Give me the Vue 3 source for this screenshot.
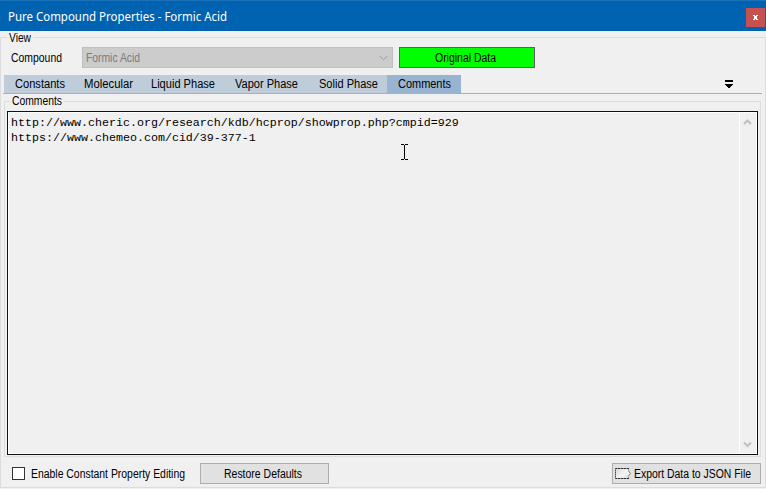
<script setup>
import { h } from 'vue'

// Single-line label condensed to a given advance width; the baseline sits 4px above the box bottom.
const Label = (props) =>
  h('svg', { class: 'label', width: props.w, height: 17 }, [
    h('text', { x: 0, y: 13, textLength: props.w, lengthAdjust: 'spacingAndGlyphs' }, props.text)
  ])
Label.props = ['text', 'w']

const tabs = [
  { text: 'Constants', w: 50, width: 69 },
  { text: 'Molecular', w: 49, width: 67 },
  { text: 'Liquid Phase', w: 64, width: 84 },
  { text: 'Vapor Phase', w: 63, width: 84 },
  { text: 'Solid Phase', w: 59, width: 79 },
  { text: 'Comments', w: 53, width: 74, active: true }
]
const comments = [
  'http://www.cheric.org/research/kdb/hcprop/showprop.php?cmpid=929',
  'https://www.chemeo.com/cid/39-377-1'
]
</script>

<template>
  <div class="window">
    <header class="titlebar">
      <Label class="title" text="Pure Compound Properties - Formic Acid" :w="219" />
      <button class="close" aria-label="Close">
        <svg width="5" height="5" shape-rendering="crispEdges" fill="#fff">
          <path d="M0 0h2v1h1V0h2v1H4v3h1v1H3V4H2v1H0V4h1V1H0z" />
        </svg>
      </button>
    </header>
    <section class="view">
      <div class="caption"><Label text="View" :w="22" /></div>
      <div class="compound">
        <Label class="name" text="Compound" :w="51" />
        <div class="combo">
          <Label text="Formic Acid" :w="54" />
          <svg width="9" height="6"><path d="M.5.8l4 4 4-4" fill="none" stroke="#9a9a9a" /></svg>
        </div>
        <button class="original"><Label text="Original Data" :w="61" /></button>
      </div>
      <nav class="tabs">
        <div
          v-for="tab in tabs"
          :key="tab.text"
          class="tab"
          :class="{ active: tab.active }"
          :style="{ width: tab.width + 'px' }"
        >
          <Label :text="tab.text" :w="tab.w" />
        </div>
        <svg class="overflow" width="8" height="8" shape-rendering="crispEdges">
          <path d="M0 0h8v2H0zM0 4h8v1H7v1H6v1H5v1H3V7H2V6H1V5H0z" />
        </svg>
      </nav>
      <section class="comments">
        <div class="caption"><Label text="Comments" :w="50" /></div>
        <div class="editor">
          <div class="text">
            <div v-for="line in comments" :key="line">{{ line }}</div>
            <svg class="cursor" width="7" height="16" shape-rendering="crispEdges">
              <path d="M0 0h3v1h1V0h3v1H4v14h3v1H4v-1H3v1H0v-1h3V1H0z" />
            </svg>
          </div>
          <div class="scroll">
            <svg width="9" height="7"><path d="M1 5l3.5-3.5L8 5" fill="none" stroke="#bfbfbf" stroke-width="2" /></svg>
            <svg width="9" height="7"><path d="M1 1.5L4.5 5 8 1.5" fill="none" stroke="#bfbfbf" stroke-width="2" /></svg>
          </div>
        </div>
      </section>
      <footer class="actions">
        <span class="checkbox"></span>
        <Label class="enable" text="Enable Constant Property Editing" :w="154" />
        <button class="restore"><Label text="Restore Defaults" :w="78" /></button>
        <button class="export">
          <svg width="16" height="12">
            <defs>
              <linearGradient id="sheet" x2="1" y2="1">
                <stop stop-color="#d5dad7" /><stop offset=".6" stop-color="#f4f6f5" /><stop offset="1" stop-color="#d4dcd8" />
              </linearGradient>
            </defs>
            <path d="M.5.5h13v10H.5z" fill="url(#sheet)" stroke="#8a8a8a" />
            <path d="M0 .5h14M0 10.5h14" stroke="#333" stroke-dasharray="2 1" />
            <path d="M.5 0v11" stroke="#555" stroke-dasharray="1 1" />
            <path d="M11 4h2V2l3 3.5L13 9V7h-2z" fill="#f1f1f1" />
            <path d="M13.5 3l2 2.5-2 2.5" fill="none" stroke="#777" />
          </svg>
          <Label text="Export Data to JSON File" :w="117" />
        </button>
      </footer>
    </section>
  </div>
</template>

<style>
body { margin: 0; overflow: hidden; }
</style>

<style scoped>
* { box-sizing: border-box; }
.window {
  width: 766px; height: 489px; display: flex; flex-direction: column;
  background: #f0f0f0; color: #000; font: 12px/15px "Liberation Sans", Arial, sans-serif;
}
svg { display: block; flex: none; }
.label { fill: currentColor; overflow: visible; }
button { margin: 0; padding: 0; border-radius: 0; font: inherit; color: inherit; display: flex; align-items: center; justify-content: center; }
.titlebar {
  height: 31px; flex: none; display: flex; justify-content: space-between;
  padding: 7px 1px 0 8px; background: #0063b1; border-top: 1px solid #1a70b6; color: #fff;
}
.title { font: 12px "Noto Sans", "Open Sans", sans-serif; }
.close { width: 19px; height: 19px; background: #c75050; border: 0; }
.view { height: 451px; flex: none; margin-top: 6px; border: 1px solid #dcdcdc; display: flex; flex-direction: column; }
.caption { display: flex; margin-top: -9px; }
.caption .label {
  box-sizing: content-box; padding: 0 2px;
  background: linear-gradient(#f0f0f0, #f0f0f0) no-repeat 0 6px / 100% 5px;
}
.view > .caption { padding-left: 6px; height: 18px; }
.compound { display: flex; height: 21px; flex: none; align-items: center; padding-left: 10px; }
.name { margin-right: 20px; }
.combo {
  width: 311px; height: 21px; display: flex; align-items: center; justify-content: space-between;
  padding: 0 4px 0 3px; border: 1px solid #bfbfbf; background: #ccc; color: #7b7b7b;
}
.original { width: 136px; height: 21px; margin-left: 6px; border: 1px solid #606060; background: #0f0; }
.original .label { margin-right: 3px; }
.tabs { height: 19px; flex: none; display: flex; margin: 7px 3px 0 2px; padding-left: 1px; border-bottom: 1px solid #99b4d1; }
.tab { height: 18px; padding-left: 11px; background: #bfcddb; }
.active { background: #99b4d1; }
.overflow { margin: 5px 0 0 264px; }
.comments { width: 757px; height: 356px; flex: none; margin: 7px 0 0 3px; border: 1px solid #dcdcdc; }
.comments > .caption { height: 19px; margin-top: -10px; padding-left: 5px; }
.editor { width: 751px; height: 344px; display: flex; margin-left: 2px; border: 1px solid #111; }
.text {
  position: relative; flex: 1; padding: 3px 2px; border: 1px solid #fff;
  font: 11.67px/15px "Liberation Mono", "Courier New", monospace; white-space: pre;
}
.cursor { position: absolute; left: 392px; top: 31px; }
.scroll {
  width: 17px; display: flex; flex-direction: column; justify-content: space-between;
  align-items: flex-start; padding: 6px 0 5px 3px; border: solid #fff; border-width: 1px 1px 1px 0;
}
.actions { height: 21px; flex: none; display: flex; align-items: center; margin-top: 6px; padding-left: 11px; }
.checkbox { width: 13px; height: 13px; border: 1px solid #333; background: #fff; }
.enable { margin-left: 6px; }
.restore, .export { height: 21px; border: 1px solid #adadad; background: #e1e1e1; }
.restore { width: 129px; margin-left: 15px; }
.restore .label { margin-right: 3px; }
.export { width: 149px; margin-left: 283px; gap: 3px; justify-content: flex-start; padding-left: 2px; }
</style>
